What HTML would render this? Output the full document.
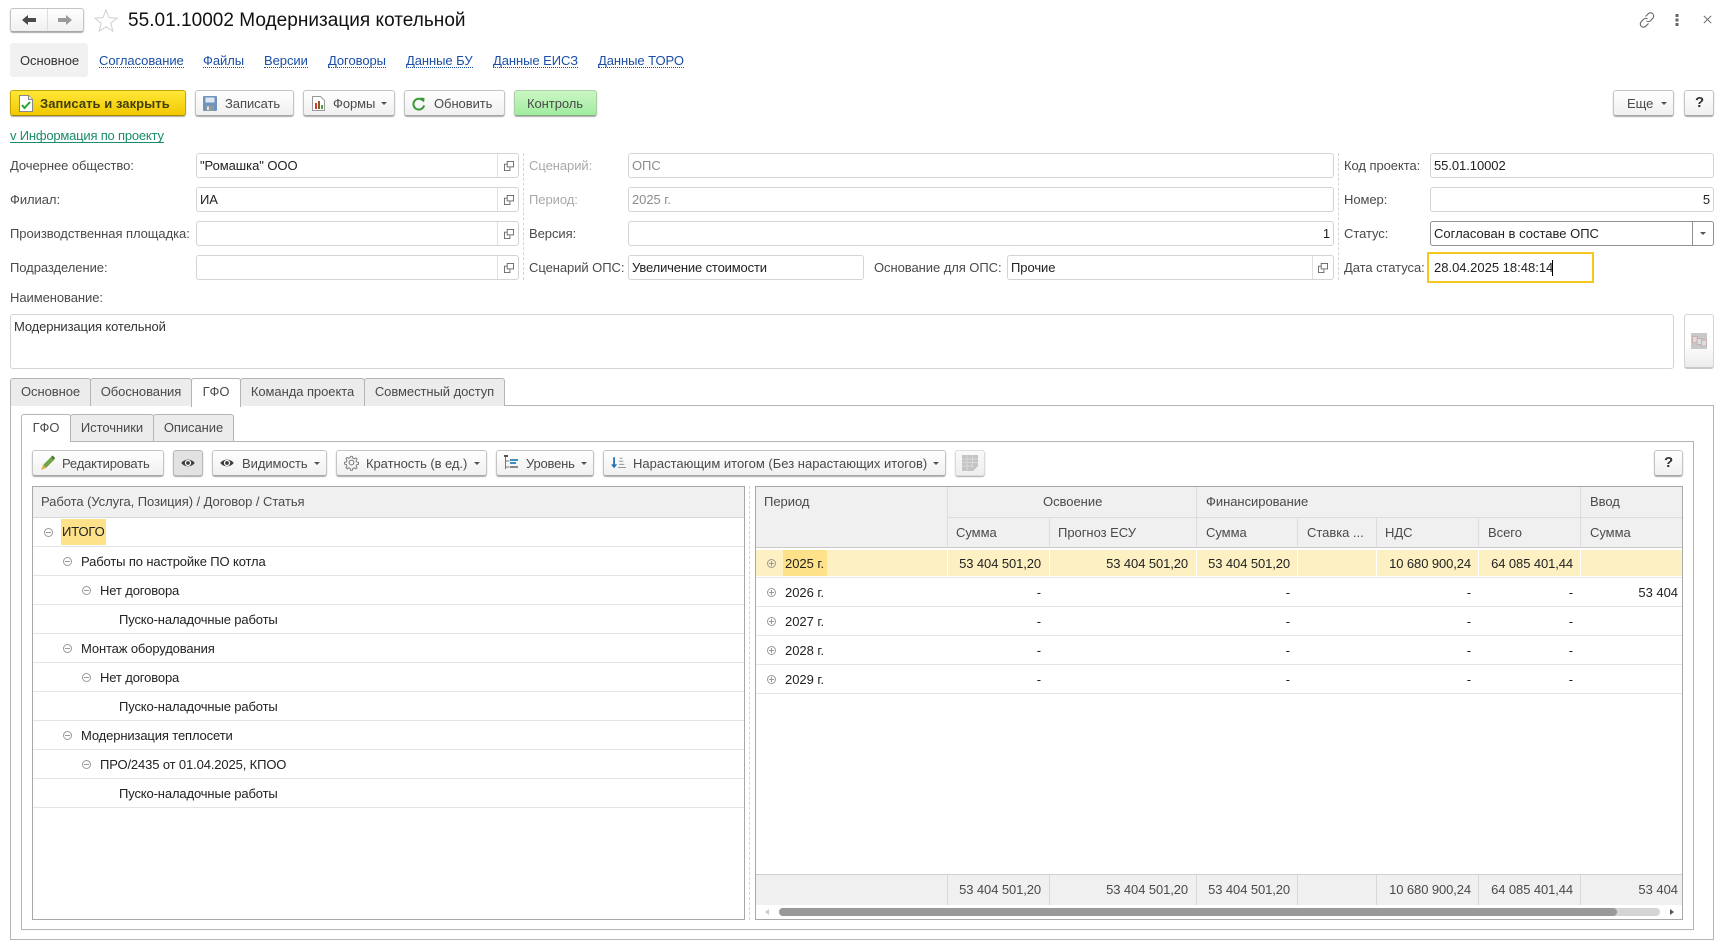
<!DOCTYPE html>
<html lang="ru">
<head>
<meta charset="utf-8">
<title>55.01.10002 Модернизация котельной</title>
<style>
html,body{margin:0;padding:0;background:#fff}
#p{position:relative;width:1732px;height:945px;overflow:hidden;background:#fff;font-family:"Liberation Sans",Arial,sans-serif;font-size:13px;color:#4a4a4a;letter-spacing:-.06px}
#p *{box-sizing:border-box}
.t{position:absolute;white-space:nowrap;line-height:16px;height:16px}
.r{text-align:right}
.d{color:#222}
.g{color:#a8a8a8}
.tr{letter-spacing:-.13px}
.l{color:#1a4fa8;border-bottom:1px dotted #1a4fa8;height:15px}
.b{position:absolute;height:26px;top:90px;border:1px solid #c4c4c4;border-bottom:1px solid #a8a8a8;border-radius:3px;background:linear-gradient(#fff,#f0f0f0);box-shadow:0 1px 1px #aaa}
.f{position:absolute;height:25px;border:1px solid #d4d4d4;border-radius:3px;background:#fff}
.s{position:absolute;top:0;bottom:0;right:20px;width:1px;background:#e0e0e0}
.a{position:absolute;width:0;height:0;border-left:3px solid transparent;border-right:3px solid transparent;border-top:3px solid #555}
.tb{position:absolute;height:27px;border:1px solid #b4b4b4;border-bottom:none;border-radius:3px 3px 0 0;background:#ececec;text-align:center;line-height:24px;color:#4a4a4a;white-space:nowrap}
.tb.on{background:#fff;height:28px;z-index:2}
.h{position:absolute;background:#c4c4c4}
.w{position:absolute;background:#fff}
svg{position:absolute;overflow:visible}
</style>
</head>
<body>
<div id="p">

<!-- header -->
<div class="b" style="left:10px;top:8px;width:74px;height:24px"></div>
<div class="h" style="left:47px;top:9px;width:1px;height:22px;background:#ddd"></div>
<svg style="left:22px;top:14px" width="14" height="12" viewBox="0 0 14 12"><path d="M0 6 6 1v3h8v4H6v3z" fill="#4a4a4a"/></svg>
<svg style="left:58px;top:14px" width="14" height="12" viewBox="0 0 14 12"><path d="M14 6 8 1v3H0v4h8v3z" fill="#9a9a9a"/></svg>
<svg style="left:94px;top:9px" width="24" height="22" viewBox="0 0 24 22"><path d="M12 1l3 7.6 8 .6-6.200 5.100 2 7.700-6.800-4.200L5.200 22l2-7.700L1 9.200l8-.6z" fill="#fff" stroke="#d0d0d0"/></svg>
<div class="t" style="left:128px;top:10px;font-size:19px;line-height:22px;height:22px;color:#111;letter-spacing:.03px">55.01.10002 Модернизация котельной</div>

<svg style="left:1639px;top:12px" width="16" height="16" viewBox="0 0 16 16" fill="none" stroke="#666" stroke-width="1.1"><path d="M6.500 4.500 9 2a3 3 0 0 1 5 4l-2.500 2.700a3 3 0 0 1-4 .3"/><path d="M9.500 11.500 7 14a3 3 0 0 1-5-4l2.500-2.700a3 3 0 0 1 4-.3"/></svg>
<svg style="left:1675px;top:14px" width="4" height="12" viewBox="0 0 4 12" fill="#666"><rect x="0.500" y="0" width="3" height="3"/><rect x="0.500" y="4.500" width="3" height="3"/><rect x="0.500" y="9" width="3" height="3"/></svg>
<svg style="left:1703px;top:15px" width="9" height="9" viewBox="0 0 9 9" stroke="#666" fill="none"><path d="M.8.800l7.400 7.400M8.200.800.800 8.200"/></svg>

<!-- top tabs -->
<div class="w" style="left:10px;top:43px;width:78px;height:34px;background:#f1f1f1;border-radius:3px"></div>
<div class="t" style="left:20px;top:53px;color:#333">Основное</div>
<div class="t l" style="left:99px;top:53px">Согласование</div>
<div class="t l" style="left:203px;top:53px">Файлы</div>
<div class="t l" style="left:264px;top:53px">Версии</div>
<div class="t l" style="left:328px;top:53px">Договоры</div>
<div class="t l" style="left:406px;top:53px">Данные БУ</div>
<div class="t l" style="left:493px;top:53px">Данные ЕИСЗ</div>
<div class="t l" style="left:598px;top:53px">Данные ТОРО</div>

<!-- command bar -->
<div class="b" style="left:10px;width:176px;background:linear-gradient(#ffe838,#f2c800);border-color:#c7a500;border-bottom-color:#a88c00"></div>
<svg style="left:19px;top:95px" width="14" height="17" viewBox="0 0 14 17"><path d="M.5.500h9l4 4v12H.5z" fill="#fff" stroke="#888"/><path d="M9.500.5v4h4" fill="#eee" stroke="#888"/><path d="M3 10l2.500 3L11 7" fill="none" stroke="#25a62a" stroke-width="2"/></svg>
<div class="t" style="left:40px;top:96px;font-weight:bold;color:#44400a;letter-spacing:.05px">Записать и закрыть</div>

<div class="b" style="left:195px;width:99px"></div>
<svg style="left:203px;top:96px" width="14" height="15" viewBox="0 0 14 15"><rect width="14" height="15" rx="1" fill="#6f94bb"/><rect x="2.500" y="1.500" width="9" height="5" fill="#dfe8f2"/><rect x="3" y="9.500" width="8" height="5.500" fill="#8d99a6"/><rect x="4" y="10.500" width="2" height="3.500" fill="#e6e6e6"/></svg>
<div class="t" style="left:225px;top:96px">Записать</div>

<div class="b" style="left:303px;width:92px"></div>
<svg style="left:312px;top:96px" width="13" height="15" viewBox="0 0 13 15"><path d="M.5.500h8l4 4v10H.5z" fill="#fff" stroke="#999"/><rect x="3" y="7" width="2" height="6" fill="#d23b2d"/><rect x="6" y="5" width="2" height="8" fill="#8a5a2b"/><rect x="9" y="9" width="2" height="4" fill="#3fa13f"/></svg>
<div class="t" style="left:333px;top:96px">Формы</div>
<div class="a" style="left:381px;top:102px"></div>

<div class="b" style="left:404px;width:101px"></div>
<svg style="left:412px;top:97px" width="13" height="14" viewBox="0 0 14 15" fill="none"><path d="M12 4.200A5.800 5.800 0 1 0 13 9" stroke="#3b9a3b" stroke-width="2.200"/><path d="M9 .5 13.500 1 13 6z" fill="#3b9a3b"/></svg>
<div class="t" style="left:434px;top:96px">Обновить</div>

<div class="b" style="left:514px;width:83px;background:linear-gradient(#cbf7c4,#9fec9f);border-color:#a9cfa5;border-bottom-color:#88a888"></div>
<div class="t" style="left:527px;top:96px">Контроль</div>

<div class="b" style="left:1613px;width:61px"></div>
<div class="t" style="left:1627px;top:96px">Еще</div>
<div class="a" style="left:1661px;top:102px"></div>
<div class="b" style="left:1684px;width:30px"></div>
<div class="t" style="left:1695px;top:95px;font-size:15px;font-weight:bold;color:#333">?</div>

<div class="t" style="left:10px;top:128px;color:#1b8c6b;border-bottom:1px solid #1b8c6b;height:15px;letter-spacing:-.2px">v Информация по проекту</div>

<!-- form column 1 -->
<div class="t" style="left:10px;top:158px">Дочернее общество:</div>
<div class="t" style="left:10px;top:192px">Филиал:</div>
<div class="t" style="left:10px;top:226px">Производственная площадка:</div>
<div class="t" style="left:10px;top:260px">Подразделение:</div>

<div class="f" style="left:196px;top:153px;width:323px"><div class="s"></div></div>
<div class="f" style="left:196px;top:187px;width:323px"><div class="s"></div></div>
<div class="f" style="left:196px;top:221px;width:323px"><div class="s"></div></div>
<div class="f" style="left:196px;top:255px;width:323px"><div class="s"></div></div>
<div class="t d" style="left:200px;top:158px">"Ромашка" ООО</div>
<div class="t d" style="left:200px;top:192px">ИА</div>
<svg style="left:504px;top:161px" width="10" height="10" viewBox="0 0 11 11" fill="none" stroke="#666"><rect x="3.500" y=".5" width="7" height="6"/><path d="M3.500 3.500H.5v7h6V7" /></svg>
<svg style="left:504px;top:195px" width="10" height="10" viewBox="0 0 11 11" fill="none" stroke="#666"><rect x="3.500" y=".5" width="7" height="6"/><path d="M3.500 3.500H.5v7h6V7" /></svg>
<svg style="left:504px;top:229px" width="10" height="10" viewBox="0 0 11 11" fill="none" stroke="#666"><rect x="3.500" y=".5" width="7" height="6"/><path d="M3.500 3.500H.5v7h6V7" /></svg>
<svg style="left:504px;top:263px" width="10" height="10" viewBox="0 0 11 11" fill="none" stroke="#666"><rect x="3.500" y=".5" width="7" height="6"/><path d="M3.500 3.500H.5v7h6V7" /></svg>

<div style="position:absolute;left:523px;top:153px;height:127px;border-left:1px dashed #d4d4d4"></div>

<!-- form column 2 -->
<div class="t g" style="left:529px;top:158px">Сценарий:</div>
<div class="t g" style="left:529px;top:192px">Период:</div>
<div class="t" style="left:529px;top:226px">Версия:</div>
<div class="t" style="left:529px;top:260px">Сценарий ОПС:</div>

<div class="f" style="left:628px;top:153px;width:706px"></div>
<div class="f" style="left:628px;top:187px;width:706px"></div>
<div class="f" style="left:628px;top:221px;width:706px"></div>
<div class="f" style="left:628px;top:255px;width:236px"></div>
<div class="t" style="left:632px;top:158px;color:#8c8c8c">ОПС</div>
<div class="t" style="left:632px;top:192px;color:#8c8c8c">2025 г.</div>
<div class="t d r" style="left:1200px;width:130px;top:226px">1</div>
<div class="t d" style="left:632px;top:260px;letter-spacing:-.15px">Увеличение стоимости</div>
<div class="t" style="left:874px;top:260px">Основание для ОПС:</div>
<div class="f" style="left:1007px;top:255px;width:327px"><div class="s"></div></div>
<div class="t d" style="left:1011px;top:260px">Прочие</div>
<svg style="left:1318px;top:263px" width="10" height="10" viewBox="0 0 11 11" fill="none" stroke="#666"><rect x="3.500" y=".5" width="7" height="6"/><path d="M3.500 3.500H.5v7h6V7" /></svg>

<div style="position:absolute;left:1338px;top:153px;height:127px;border-left:1px dashed #d4d4d4"></div>

<!-- form column 3 -->
<div class="t" style="left:1344px;top:158px">Код проекта:</div>
<div class="t" style="left:1344px;top:192px">Номер:</div>
<div class="t" style="left:1344px;top:226px">Статус:</div>
<div class="t" style="left:1344px;top:260px">Дата статуса:</div>
<div class="f" style="left:1430px;top:153px;width:284px"></div>
<div class="f" style="left:1430px;top:187px;width:284px"></div>
<div class="f" style="left:1430px;top:221px;width:284px;border-color:#909090"><div class="s" style="background:#909090"></div></div>
<div class="t d" style="left:1434px;top:158px">55.01.10002</div>
<div class="t d r" style="left:1600px;width:110px;top:192px">5</div>
<div class="t d" style="left:1434px;top:226px;letter-spacing:0">Согласован в составе ОПС</div>
<div class="a" style="left:1700px;top:232px"></div>
<div class="w" style="left:1427px;top:252px;width:167px;height:31px;border:2px solid #f5c71f"></div>
<div class="t d" style="left:1434px;top:260px;letter-spacing:0">28.04.2025 18:48:14</div>
<div class="w" style="left:1552px;top:260px;width:1px;height:16px;background:#000"></div>

<div class="t" style="left:10px;top:290px">Наименование:</div>
<div class="f" style="left:10px;top:314px;width:1664px;height:55px"></div>
<div class="t d" style="left:14px;top:319px;color:#333;letter-spacing:-.12px">Модернизация котельной</div>
<div class="f" style="left:1684px;top:314px;width:30px;height:55px;background:linear-gradient(#fff 55%,#ececec);border-bottom:2px solid #c8c8c8"></div>
<div class="w" style="left:1691px;top:333px;width:16px;height:16px;background:#c8c8c8"></div>
<svg style="left:1692px;top:336px" width="15" height="11" viewBox="0 0 15 11" fill="#ddd" stroke="#c9a0a0" stroke-width=".7"><rect x=".5" y=".5" width="5" height="6"/><rect x="5" y="2.500" width="5" height="6"/><rect x="9.500" y="4" width="5" height="6"/></svg>

<!-- outer tabs -->
<div style="position:absolute;left:10px;top:405px;width:1704px;height:535px;border:1px solid #b4b4b4"></div>
<div class="tb" style="left:10px;top:378px;width:81px;height:28px;line-height:25px">Основное</div>
<div class="tb" style="left:90px;top:378px;width:102px;height:28px;line-height:25px">Обоснования</div>
<div class="tb on" style="left:191px;top:378px;width:50px;height:29px;line-height:25px">ГФО</div>
<div class="tb" style="left:240px;top:378px;width:125px;height:28px;line-height:25px">Команда проекта</div>
<div class="tb" style="left:364px;top:378px;width:141px;height:28px;line-height:25px">Совместный доступ</div>

<!-- inner tabs -->
<div style="position:absolute;left:21px;top:441px;width:1673px;height:489px;border:1px solid #b4b4b4"></div>
<div class="tb on" style="left:21px;top:414px;width:50px;height:28px;line-height:25px">ГФО</div>
<div class="tb" style="left:70px;top:414px;width:84px;height:27px;line-height:25px">Источники</div>
<div class="tb" style="left:153px;top:414px;width:81px;height:27px;line-height:25px">Описание</div>

<!-- table toolbar -->
<div class="b" style="left:32px;top:450px;width:132px"></div>
<svg style="left:40px;top:455px" width="15" height="16" viewBox="0 0 15 16"><path d="M3 10 11 2l3 3-8 8z" fill="#6fa544"/><path d="M11 2l1.500-1.500 2.500 2.500L14 5z" fill="#3f6f2a"/><path d="M3 10l3 3-5 2z" fill="#e8a94e"/></svg>
<div class="t" style="left:62px;top:456px;letter-spacing:-.17px">Редактировать</div>
<div class="b" style="left:173px;top:450px;width:30px;background:#e2e2e2;border-color:#b8b8b8"></div>
<svg style="left:181px;top:458px" width="14" height="10" viewBox="0 0 12 9"><path d="M0 4.500C3 .5 9 .5 12 4.500 9 8.500 3 8.500 0 4.500z" fill="#3c3c3c"/><circle cx="6" cy="4.500" r="2.800" fill="#fff"/><circle cx="6" cy="4.500" r="1.700" fill="#3c3c3c"/></svg>
<div class="b" style="left:212px;top:450px;width:115px"></div>
<svg style="left:220px;top:458px" width="14" height="10" viewBox="0 0 12 9"><path d="M0 4.500C3 .5 9 .5 12 4.500 9 8.500 3 8.500 0 4.500z" fill="#3c3c3c"/><circle cx="6" cy="4.500" r="2.800" fill="#fff"/><circle cx="6" cy="4.500" r="1.700" fill="#3c3c3c"/></svg>
<div class="t" style="left:242px;top:456px">Видимость</div>
<div class="a" style="left:314px;top:462px"></div>
<div class="b" style="left:336px;top:450px;width:151px"></div>
<svg style="left:344px;top:455px" width="15" height="15" viewBox="0 0 14 14" fill="none" stroke="#777"><path d="M6 .5h2l.4 2 1.500.7 1.700-1.100 1.400 1.400-1.100 1.700.7 1.500 2 .4v2l-2 .4-.7 1.500 1.100 1.700-1.400 1.400-1.700-1.100-1.500.7-.4 2H6l-.4-2-1.500-.7-1.700 1.100L1 12.600l1.100-1.700-.7-1.500-2-.4v-2l2-.4.7-1.500L1 3l1.400-1.400 1.700 1.100 1.500-.7z" transform="translate(1 .8) scale(.86)"/><circle cx="7" cy="7" r="2.200"/></svg>
<div class="t" style="left:366px;top:456px">Кратность (в ед.)</div>
<div class="a" style="left:474px;top:462px"></div>
<div class="b" style="left:496px;top:450px;width:98px"></div>
<svg style="left:504px;top:455px" width="14" height="15" viewBox="0 0 14 15"><path d="M1.500 1v13M1.500 6h4M1.500 12h4" stroke="#777" fill="none"/><rect x="0" y="0" width="4" height="2" fill="#555"/><rect x="6" y="4" width="8" height="2" fill="#3f8fc4"/><rect x="6" y="7" width="6" height="2" fill="#3f8fc4"/><rect x="6" y="11" width="8" height="2" fill="#888"/></svg>
<div class="t" style="left:526px;top:456px;letter-spacing:-.2px">Уровень</div>
<div class="a" style="left:581px;top:462px"></div>
<div class="b" style="left:603px;top:450px;width:343px"></div>
<svg style="left:611px;top:457px" width="15" height="12" viewBox="0 0 17 13"><path d="M3.500 0v9" stroke="#1f6fb2" stroke-width="2"/><path d="M0 8h7l-3.500 4.500z" fill="#1f6fb2"/><path d="M10 1h3M9 4.500h5M9 8h6M8 11.500h9" stroke="#888"/></svg>
<div class="t" style="left:633px;top:456px;letter-spacing:0">Нарастающим итогом (Без нарастающих итогов)</div>
<div class="a" style="left:933px;top:462px"></div>
<div class="b" style="left:955px;top:450px;width:30px;background:linear-gradient(#fafafa,#eee);border-color:#dcdcdc"></div>
<svg style="left:962px;top:455px" width="16" height="16" viewBox="0 0 16 16"><path d="M0 0h16v11l-5 5H0z" fill="#c4c4c4"/><path d="M0 4h16M0 7.500h16M0 11h11M5 0v16M10.500 0v13" stroke="#d8d8d8"/></svg>
<div class="b" style="left:1654px;top:450px;width:29px"></div>
<div class="t" style="left:1664px;top:455px;font-size:15px;font-weight:bold;color:#333">?</div>

<!-- left table -->
<div style="position:absolute;left:32px;top:486px;width:713px;height:434px;border:1px solid #a8a8a8;background:#fff"></div>
<div class="w" style="left:33px;top:487px;width:711px;height:31px;background:#f0f0f0;border-bottom:1px solid #d8d8d8"></div>
<div class="t" style="left:41px;top:494px">Работа (Услуга, Позиция) / Договор / Статья</div>

<div class="h" style="left:33px;top:546px;width:711px;height:1px;background:#e4e4e4"></div>
<div class="h" style="left:33px;top:575px;width:711px;height:1px;background:#e4e4e4"></div>
<div class="h" style="left:33px;top:604px;width:711px;height:1px;background:#e4e4e4"></div>
<div class="h" style="left:33px;top:633px;width:711px;height:1px;background:#e4e4e4"></div>
<div class="h" style="left:33px;top:662px;width:711px;height:1px;background:#e4e4e4"></div>
<div class="h" style="left:33px;top:691px;width:711px;height:1px;background:#e4e4e4"></div>
<div class="h" style="left:33px;top:720px;width:711px;height:1px;background:#e4e4e4"></div>
<div class="h" style="left:33px;top:749px;width:711px;height:1px;background:#e4e4e4"></div>
<div class="h" style="left:33px;top:778px;width:711px;height:1px;background:#e4e4e4"></div>
<div class="h" style="left:33px;top:807px;width:711px;height:1px;background:#e4e4e4"></div>

<div class="w" style="left:61px;top:519px;width:45px;height:26px;background:#fee28a"></div>
<div class="t d tr" style="left:62px;top:524px">ИТОГО</div>
<div class="t d tr" style="left:81px;top:554px">Работы по настройке ПО котла</div>
<div class="t d tr" style="left:100px;top:583px">Нет договора</div>
<div class="t d tr" style="left:119px;top:612px">Пуско-наладочные работы</div>
<div class="t d tr" style="left:81px;top:641px">Монтаж оборудования</div>
<div class="t d tr" style="left:100px;top:670px">Нет договора</div>
<div class="t d tr" style="left:119px;top:699px">Пуско-наладочные работы</div>
<div class="t d tr" style="left:81px;top:728px">Модернизация теплосети</div>
<div class="t d tr" style="left:100px;top:757px">ПРО/2435 от 01.04.2025, КПОО</div>
<div class="t d tr" style="left:119px;top:786px">Пуско-наладочные работы</div>

<svg style="left:44px;top:528px" width="9" height="9" viewBox="0 0 9 9" fill="none" stroke="#999"><circle cx="4.500" cy="4.500" r="4"/><path d="M2 4.500h5"/></svg>
<svg style="left:63px;top:557px" width="9" height="9" viewBox="0 0 9 9" fill="none" stroke="#999"><circle cx="4.500" cy="4.500" r="4"/><path d="M2 4.500h5"/></svg>
<svg style="left:82px;top:586px" width="9" height="9" viewBox="0 0 9 9" fill="none" stroke="#999"><circle cx="4.500" cy="4.500" r="4"/><path d="M2 4.500h5"/></svg>
<svg style="left:63px;top:644px" width="9" height="9" viewBox="0 0 9 9" fill="none" stroke="#999"><circle cx="4.500" cy="4.500" r="4"/><path d="M2 4.500h5"/></svg>
<svg style="left:82px;top:673px" width="9" height="9" viewBox="0 0 9 9" fill="none" stroke="#999"><circle cx="4.500" cy="4.500" r="4"/><path d="M2 4.500h5"/></svg>
<svg style="left:63px;top:731px" width="9" height="9" viewBox="0 0 9 9" fill="none" stroke="#999"><circle cx="4.500" cy="4.500" r="4"/><path d="M2 4.500h5"/></svg>
<svg style="left:82px;top:760px" width="9" height="9" viewBox="0 0 9 9" fill="none" stroke="#999"><circle cx="4.500" cy="4.500" r="4"/><path d="M2 4.500h5"/></svg>

<div style="position:absolute;left:749px;top:486px;height:434px;border-left:1px dashed #d4d4d4"></div>

<!-- right table -->
<div style="position:absolute;left:755px;top:486px;width:928px;height:434px;border:1px solid #a8a8a8;background:#fff;overflow:hidden">
 <div style="position:absolute;left:1px;top:0;width:925px;height:432px;letter-spacing:-.03px">
  <div style="position:absolute;left:-1px;top:0;width:926px;height:61px;background:#f0f0f0;border-bottom:1px solid #c8c8c8"></div>
  <div class="h" style="left:190px;top:30px;width:735px;height:1px;background:#dcdcdc"></div>
  <div class="h" style="left:190px;top:0;width:1px;height:61px;background:#dcdcdc"></div>
  <div class="h" style="left:292px;top:31px;width:1px;height:30px;background:#dcdcdc"></div>
  <div class="h" style="left:439px;top:0;width:1px;height:61px;background:#dcdcdc"></div>
  <div class="h" style="left:540px;top:31px;width:1px;height:30px;background:#dcdcdc"></div>
  <div class="h" style="left:619px;top:31px;width:1px;height:30px;background:#dcdcdc"></div>
  <div class="h" style="left:721px;top:31px;width:1px;height:30px;background:#dcdcdc"></div>
  <div class="h" style="left:823px;top:0;width:1px;height:61px;background:#dcdcdc"></div>

  <div class="t" style="left:7px;top:7px">Период</div>
  <div class="t" style="left:286px;top:7px">Освоение</div>
  <div class="t" style="left:449px;top:7px">Финансирование</div>
  <div class="t" style="left:833px;top:7px">Ввод</div>
  <div class="t" style="left:199px;top:38px">Сумма</div>
  <div class="t" style="left:301px;top:38px">Прогноз ЕСУ</div>
  <div class="t" style="left:449px;top:38px">Сумма</div>
  <div class="t" style="left:550px;top:38px">Ставка ...</div>
  <div class="t" style="left:628px;top:38px">НДС</div>
  <div class="t" style="left:731px;top:38px">Всего</div>
  <div class="t" style="left:833px;top:38px">Сумма</div>

  <!-- 2025 row -->
  <div class="w" style="left:-1px;top:63px;width:926px;height:26px;background:#fdf1c4"></div>
  <div class="w" style="left:26px;top:63px;width:44px;height:26px;background:#fee28a"></div>
  <div class="h" style="left:190px;top:63px;width:1px;height:26px;background:#fff"></div>
  <div class="h" style="left:292px;top:63px;width:1px;height:26px;background:#fff"></div>
  <div class="h" style="left:439px;top:63px;width:1px;height:26px;background:#fff"></div>
  <div class="h" style="left:540px;top:63px;width:1px;height:26px;background:#fff"></div>
  <div class="h" style="left:619px;top:63px;width:1px;height:26px;background:#fff"></div>
  <div class="h" style="left:721px;top:63px;width:1px;height:26px;background:#fff"></div>
  <div class="h" style="left:823px;top:63px;width:1px;height:26px;background:#fff"></div>

  <div class="h" style="left:-1px;top:90px;width:926px;height:1px;background:#e8e8e8"></div>
  <div class="h" style="left:-1px;top:119px;width:926px;height:1px;background:#e4e4e4"></div>
  <div class="h" style="left:-1px;top:148px;width:926px;height:1px;background:#e4e4e4"></div>
  <div class="h" style="left:-1px;top:177px;width:926px;height:1px;background:#e4e4e4"></div>
  <div class="h" style="left:-1px;top:206px;width:926px;height:1px;background:#e4e4e4"></div>

  <div class="t d" style="left:28px;top:69px">2025 г.</div>
  <div class="t d" style="left:28px;top:98px">2026 г.</div>
  <div class="t d" style="left:28px;top:127px">2027 г.</div>
  <div class="t d" style="left:28px;top:156px">2028 г.</div>
  <div class="t d" style="left:28px;top:185px">2029 г.</div>
  <svg style="left:10px;top:72px" width="9" height="9" viewBox="0 0 9 9" fill="none" stroke="#999"><circle cx="4.500" cy="4.500" r="4"/><path d="M2 4.500h5M4.500 2v5"/></svg>
  <svg style="left:10px;top:101px" width="9" height="9" viewBox="0 0 9 9" fill="none" stroke="#999"><circle cx="4.500" cy="4.500" r="4"/><path d="M2 4.500h5M4.500 2v5"/></svg>
  <svg style="left:10px;top:130px" width="9" height="9" viewBox="0 0 9 9" fill="none" stroke="#999"><circle cx="4.500" cy="4.500" r="4"/><path d="M2 4.500h5M4.500 2v5"/></svg>
  <svg style="left:10px;top:159px" width="9" height="9" viewBox="0 0 9 9" fill="none" stroke="#999"><circle cx="4.500" cy="4.500" r="4"/><path d="M2 4.500h5M4.500 2v5"/></svg>
  <svg style="left:10px;top:188px" width="9" height="9" viewBox="0 0 9 9" fill="none" stroke="#999"><circle cx="4.500" cy="4.500" r="4"/><path d="M2 4.500h5M4.500 2v5"/></svg>

  <div class="t d r" style="left:184px;width:100px;top:69px;letter-spacing:-.1px">53 404 501,20</div>
  <div class="t d r" style="left:331px;width:100px;top:69px;letter-spacing:-.1px">53 404 501,20</div>
  <div class="t d r" style="left:433px;width:100px;top:69px;letter-spacing:-.1px">53 404 501,20</div>
  <div class="t d r" style="left:614px;width:100px;top:69px;letter-spacing:-.1px">10 680 900,24</div>
  <div class="t d r" style="left:716px;width:100px;top:69px;letter-spacing:-.1px">64 085 401,44</div>

  <div class="t d r" style="left:184px;width:100px;top:98px">-</div>
  <div class="t d r" style="left:433px;width:100px;top:98px">-</div>
  <div class="t d r" style="left:614px;width:100px;top:98px">-</div>
  <div class="t d r" style="left:716px;width:100px;top:98px">-</div>
  <div class="t d r" style="left:821px;width:100px;top:98px">53 404</div>

  <div class="t d r" style="left:184px;width:100px;top:127px">-</div>
  <div class="t d r" style="left:433px;width:100px;top:127px">-</div>
  <div class="t d r" style="left:614px;width:100px;top:127px">-</div>
  <div class="t d r" style="left:716px;width:100px;top:127px">-</div>

  <div class="t d r" style="left:184px;width:100px;top:156px">-</div>
  <div class="t d r" style="left:433px;width:100px;top:156px">-</div>
  <div class="t d r" style="left:614px;width:100px;top:156px">-</div>
  <div class="t d r" style="left:716px;width:100px;top:156px">-</div>

  <div class="t d r" style="left:184px;width:100px;top:185px">-</div>
  <div class="t d r" style="left:433px;width:100px;top:185px">-</div>
  <div class="t d r" style="left:614px;width:100px;top:185px">-</div>
  <div class="t d r" style="left:716px;width:100px;top:185px">-</div>

  <!-- footer -->
  <div style="position:absolute;left:-1px;top:387px;width:926px;height:31px;background:#f0f0f0;border-top:1px solid #d0d0d0"></div>
  <div class="h" style="left:190px;top:388px;width:1px;height:30px;background:#d8d8d8"></div>
  <div class="h" style="left:292px;top:388px;width:1px;height:30px;background:#d8d8d8"></div>
  <div class="h" style="left:439px;top:388px;width:1px;height:30px;background:#d8d8d8"></div>
  <div class="h" style="left:540px;top:388px;width:1px;height:30px;background:#d8d8d8"></div>
  <div class="h" style="left:619px;top:388px;width:1px;height:30px;background:#d8d8d8"></div>
  <div class="h" style="left:721px;top:388px;width:1px;height:30px;background:#d8d8d8"></div>
  <div class="h" style="left:823px;top:388px;width:1px;height:30px;background:#d8d8d8"></div>
  <div class="t r" style="left:184px;width:100px;top:395px;letter-spacing:-.1px">53 404 501,20</div>
  <div class="t r" style="left:331px;width:100px;top:395px;letter-spacing:-.1px">53 404 501,20</div>
  <div class="t r" style="left:433px;width:100px;top:395px;letter-spacing:-.1px">53 404 501,20</div>
  <div class="t r" style="left:614px;width:100px;top:395px;letter-spacing:-.1px">10 680 900,24</div>
  <div class="t r" style="left:716px;width:100px;top:395px;letter-spacing:-.1px">64 085 401,44</div>
  <div class="t r" style="left:821px;width:100px;top:395px">53 404</div>

  <!-- scrollbar -->
  <div class="w" style="left:22px;top:421px;width:881px;height:8px;background:#d4d4d4;border-radius:4px"></div>
  <div class="w" style="left:22px;top:421px;width:838px;height:8px;background:#999;border-radius:4px"></div>
  <svg style="left:8px;top:422px" width="4" height="6" viewBox="0 0 4 6"><path d="M4 0v6L0 3z" fill="#ccc"/></svg>
  <svg style="left:913px;top:422px" width="4" height="6" viewBox="0 0 4 6"><path d="M0 0v6l4-3z" fill="#555"/></svg>
 </div>
</div>

</div>
</body>
</html>
